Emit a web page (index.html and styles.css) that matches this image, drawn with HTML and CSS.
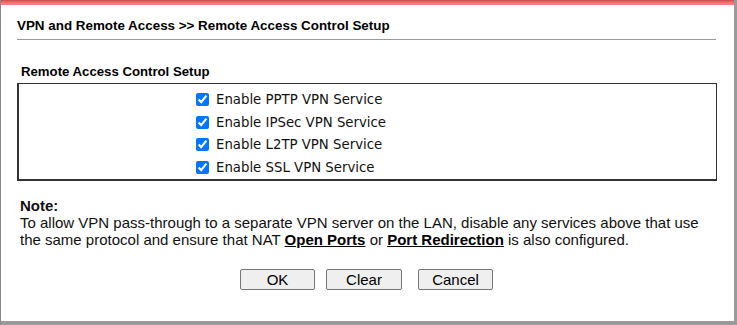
FILE: index.html
```html
<!DOCTYPE html>
<html>
<head>
<meta charset="utf-8">
<link rel="stylesheet" href="styles.css">
</head>
<body>
<div class="frame">
  <div class="topbar"></div>
  <div class="content">
    <div class="title">VPN and Remote Access &gt;&gt; Remote Access Control Setup</div>
    <div class="rule"></div>
    <div class="section-title">Remote Access Control Setup</div>
    <div class="box">
      <label class="row"><input type="checkbox" checked><span>Enable PPTP VPN Service</span></label>
      <label class="row"><input type="checkbox" checked><span>Enable IPSec VPN Service</span></label>
      <label class="row"><input type="checkbox" checked><span>Enable L2TP VPN Service</span></label>
      <label class="row"><input type="checkbox" checked><span>Enable SSL VPN Service</span></label>
    </div>
    <div class="note">
      <div class="note-head">Note:</div>
      <div class="note-text">To allow VPN pass-through to a separate VPN server on the LAN, disable any services above that use the same protocol and ensure that NAT <a href="#">Open Ports</a> or <a href="#">Port Redirection</a> is also configured.</div>
    </div>
    <div class="buttons">
      <button class="btn">OK</button>
      <button class="btn btn-wide">Clear</button>
      <button class="btn btn-far">Cancel</button>
    </div>
  </div>
</div>
</body>
</html>
```
FILE: styles.css
```css
html, body { margin: 0; padding: 0; background: #fff; }
.frame {
  width: 737px;
  height: 325px;
  box-sizing: border-box;
  display: flex;
  flex-direction: column;
  border-left: 1px solid #8a8a8a;
  border-right: 3px solid #9a9a9a;
  border-bottom: 4px solid #9a9a9a;
  overflow: hidden;
}
.topbar {
  height: 5px;
  background: linear-gradient(#c84a4a, #f06a6a 40%, #f28a86);
  margin-left: -1px;
  margin-right: -3px;
  flex: none;
}
.content {
  padding: 13px 17px 0 16px;
  font-family: "Liberation Sans", Arial, sans-serif;
  color: #000;
}
.title {
  font-weight: bold;
  font-size: 13.4px;
  line-height: 16px;
}
.rule {
  height: 1px;
  background: #9a9a9a;
  margin-top: 5px;
  width: 699px;
}
.section-title {
  font-weight: bold;
  font-size: 13.2px;
  line-height: 16px;
  margin-top: 24px;
  padding-left: 4px;
}
.box {
  margin-top: 3px;
  width: 700px;
  height: 98px;
  box-sizing: border-box;
  border: 1px solid #333;
  border-left-width: 2px;
  border-bottom-width: 2px;
  padding-top: 4px;
  display: flex;
  flex-direction: column;
  padding-left: 177px;
}
.row {
  display: flex;
  align-items: center;
  height: 23px;
  font-family: "DejaVu Sans", Verdana, sans-serif;
  font-size: 13.3px;
  color: #111;
}
.row input {
  width: 13px;
  height: 13px;
  margin: 0 7px 0 0;
  accent-color: #0075ff;
}
.note {
  margin-top: 16px;
  padding-left: 3px;
  font-size: 15px;
  line-height: 17px;
  color: #111;
}
.note-head { font-weight: bold; }
.note a { color: #000; font-weight: bold; text-decoration: underline; }
.buttons {
  display: flex;
  margin-top: 21px;
  padding-left: 223px;
}
.btn {
  width: 75px;
  height: 21px;
  background: #efefef;
  border: 1px solid #767676;
  border-radius: 2px;
  font-family: "Liberation Sans", Arial, sans-serif;
  font-size: 15px;
  color: #000;
  padding: 0;
}
.btn-wide { width: 76px; margin-left: 11px; }
.btn-far { margin-left: 16px; }
```
